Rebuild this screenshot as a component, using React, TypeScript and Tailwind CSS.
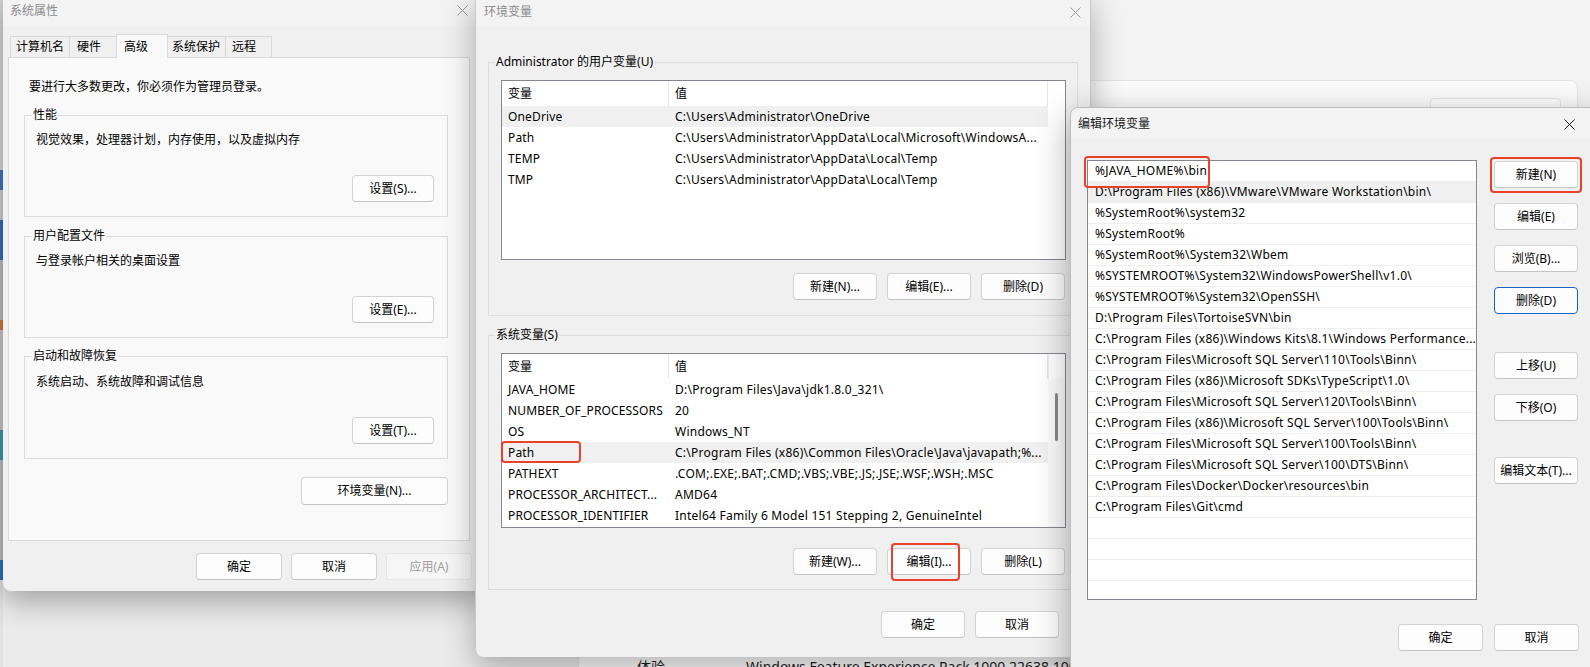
import React from "react";

const FONT = "font-['Noto_Sans','Noto_Sans_CJK_SC',sans-serif]";

function X({ color }: { color: string }) {
  return (
    <svg width="11" height="11" viewBox="0 0 11 11" fill="none">
      <path d="M0.5 0.5L10.5 10.5M10.5 0.5L0.5 10.5" stroke={color} strokeWidth="1" />
    </svg>
  );
}

type BtnProps = { children: React.ReactNode; className?: string; variant?: "normal" | "disabled" | "focus" };
function Btn({ children, className = "", variant = "normal" }: BtnProps) {
  const v =
    variant === "disabled"
      ? "border-[#e6e6e6] bg-[#f6f6f6] text-[#9d9d9d]"
      : variant === "focus"
      ? "border-[#1664c0] bg-[#fdfdfd] text-black"
      : "border-[#d3d3d3] border-b-[#c4c4c4] bg-[#fdfdfd] text-black";
  return (
    <div className={`flex shrink-0 items-center justify-center rounded-[4px] border text-[12px] leading-none ${v} ${className}`}>
      {children}
    </div>
  );
}

function Group({
  label,
  className,
  labelClass,
  children,
}: {
  label: string;
  className: string;
  labelClass: string;
  children: React.ReactNode;
}) {
  return (
    <div className={`relative flex flex-col border border-[#dcdcdc] ${className}`}>
      <span className={`absolute top-[-9px] px-[1px] leading-[16px] ${labelClass}`}>{label}</span>
      {children}
    </div>
  );
}

function RedBox({ className }: { className: string }) {
  return <div className={`pointer-events-none absolute rounded-[4px] border-2 border-[#e8412c] ${className}`} />;
}

type Row = [string, string];

function VarList({ rows, hl, scroll, className, redRow }: { rows: Row[]; hl: number; scroll?: boolean; className: string; redRow?: number }) {
  return (
    <div className={`relative flex border border-[#838790] bg-white ${className}`}>
      <div className="flex w-[546px] flex-col">
        <div className="flex h-[25px] shrink-0 items-center">
          <div className="flex h-full w-[167px] items-center border-r border-[#e5e5e5] pl-[6px]">变量</div>
          <div className="flex h-full w-[379px] items-center border-r border-[#e5e5e5] pl-[6px]">值</div>
        </div>
        {rows.map((r, i) => (
          <div key={i} className={`relative flex h-[21px] shrink-0 items-center ${i === hl ? "bg-[#f0f0f0]" : ""}`}>
            <div className="w-[167px] overflow-hidden whitespace-nowrap pl-[6px] tracking-[0.15px]">{r[0]}</div>
            <div className="w-[379px] overflow-hidden whitespace-nowrap pl-[6px] pr-[2px] tracking-[0.25px]">{r[1]}</div>
            {redRow === i && <RedBox className="left-[-1px] top-[-1px] h-[22px] w-[80px]" />}
          </div>
        ))}
      </div>
      {scroll && (
        <div className="flex flex-1 flex-col">
          <div className="h-[25px] border-l border-[#eeeeee]" />
          <div className="flex flex-1 justify-center bg-[#fbfbfb] pt-[14px]">
            <div className="h-[48px] w-[3px] rounded-full bg-[#8a8a8a]" />
          </div>
        </div>
      )}
    </div>
  );
}

const userVars: Row[] = [
  ["OneDrive", "C:\\Users\\Administrator\\OneDrive"],
  ["Path", "C:\\Users\\Administrator\\AppData\\Local\\Microsoft\\WindowsA..."],
  ["TEMP", "C:\\Users\\Administrator\\AppData\\Local\\Temp"],
  ["TMP", "C:\\Users\\Administrator\\AppData\\Local\\Temp"],
];

const sysVars: Row[] = [
  ["JAVA_HOME", "D:\\Program Files\\Java\\jdk1.8.0_321\\"],
  ["NUMBER_OF_PROCESSORS", "20"],
  ["OS", "Windows_NT"],
  ["Path", "C:\\Program Files (x86)\\Common Files\\Oracle\\Java\\javapath;%..."],
  ["PATHEXT", ".COM;.EXE;.BAT;.CMD;.VBS;.VBE;.JS;.JSE;.WSF;.WSH;.MSC"],
  ["PROCESSOR_ARCHITECT...", "AMD64"],
  ["PROCESSOR_IDENTIFIER", "Intel64 Family 6 Model 151 Stepping 2, GenuineIntel"],
];

const paths = [
  "%JAVA_HOME%\\bin",
  "D:\\Program Files (x86)\\VMware\\VMware Workstation\\bin\\",
  "%SystemRoot%\\system32",
  "%SystemRoot%",
  "%SystemRoot%\\System32\\Wbem",
  "%SYSTEMROOT%\\System32\\WindowsPowerShell\\v1.0\\",
  "%SYSTEMROOT%\\System32\\OpenSSH\\",
  "D:\\Program Files\\TortoiseSVN\\bin",
  "C:\\Program Files (x86)\\Windows Kits\\8.1\\Windows Performance...",
  "C:\\Program Files\\Microsoft SQL Server\\110\\Tools\\Binn\\",
  "C:\\Program Files (x86)\\Microsoft SDKs\\TypeScript\\1.0\\",
  "C:\\Program Files\\Microsoft SQL Server\\120\\Tools\\Binn\\",
  "C:\\Program Files (x86)\\Microsoft SQL Server\\100\\Tools\\Binn\\",
  "C:\\Program Files\\Microsoft SQL Server\\100\\Tools\\Binn\\",
  "C:\\Program Files\\Microsoft SQL Server\\100\\DTS\\Binn\\",
  "C:\\Program Files\\Docker\\Docker\\resources\\bin",
  "C:\\Program Files\\Git\\cmd",
  "",
  "",
  "",
  "",
  "",
];

function SystemProps() {
  return (
    <div className="absolute left-[3px] top-[-6px] flex h-[597px] w-[483px] flex-col rounded-b-[8px] bg-[#f0f0f0] shadow-[0_10px_30px_rgba(0,0,0,0.32)]">
      <div className="flex h-[32px] shrink-0 items-center justify-between bg-[#f3f3f3] pl-[7px] pr-[18px] pt-[1px]">
        <span className="text-[#8c8c8c]">系统属性</span>
        <X color="#9a9a9a" />
      </div>
      <div className="relative z-10 -mb-px ml-[7px] mt-[8px] flex h-[24px] items-end">
        <div className="flex h-[22px] w-[60px] items-center border border-[#d9d9d9] bg-[#f0f0f0] pl-[5px]">计算机名</div>
        <div className="-ml-px flex h-[22px] w-[48px] items-center border border-[#d9d9d9] bg-[#f0f0f0] pl-[7px]">硬件</div>
        <div className="-ml-px flex h-[24px] w-[52px] items-start border border-b-0 border-[#d9d9d9] bg-[#f9f9f9] pl-[7px] pt-[3px]">高级</div>
        <div className="-ml-px flex h-[22px] w-[59px] items-center border border-[#d9d9d9] bg-[#f0f0f0] pl-[4px]">系统保护</div>
        <div className="-ml-px flex h-[22px] w-[47px] items-center border border-[#d9d9d9] bg-[#f0f0f0] pl-[6px]">远程</div>
      </div>
      <div className="ml-[5px] flex h-[484px] w-[462px] flex-col border border-[#d9d9d9] bg-[#f9f9f9]">
        <p className="ml-[20px] mt-[21px] leading-[16px]">要进行大多数更改，你必须作为管理员登录。</p>
        <Group label="性能" className="ml-[15px] mt-[20px] h-[102px] w-[424px]" labelClass="left-[7px] bg-[#f9f9f9]">
          <p className="ml-[11px] mt-[16px] leading-[16px]">视觉效果，处理器计划，内存使用，以及虚拟内存</p>
          <Btn className="mr-[13px] mt-[27px] h-[27px] w-[82px] self-end">设置(S)...</Btn>
        </Group>
        <Group label="用户配置文件" className="ml-[15px] mt-[19px] h-[102px] w-[424px]" labelClass="left-[7px] bg-[#f9f9f9]">
          <p className="ml-[11px] mt-[16px] leading-[16px]">与登录帐户相关的桌面设置</p>
          <Btn className="mr-[13px] mt-[27px] h-[27px] w-[82px] self-end">设置(E)...</Btn>
        </Group>
        <Group label="启动和故障恢复" className="ml-[15px] mt-[18px] h-[103px] w-[424px]" labelClass="left-[7px] bg-[#f9f9f9]">
          <p className="ml-[11px] mt-[17px] leading-[16px]">系统启动、系统故障和调试信息</p>
          <Btn className="mr-[13px] mt-[27px] h-[27px] w-[82px] self-end">设置(T)...</Btn>
        </Group>
        <Btn className="mr-[21px] mt-[18px] h-[28px] w-[147px] self-end">环境变量(N)...</Btn>
      </div>
      <div className="ml-[193px] mt-[12px] flex gap-[9px]">
        <Btn className="h-[27px] w-[86px]">确定</Btn>
        <Btn className="h-[27px] w-[86px]">取消</Btn>
        <Btn className="h-[27px] w-[86px]" variant="disabled">应用(A)</Btn>
      </div>
    </div>
  );
}

function EnvVars() {
  return (
    <div className="absolute left-[475px] top-[-6px] flex h-[663px] w-[616px] flex-col rounded-b-[8px] border-x border-[#c9c9c9] bg-[#f0f0f0] shadow-[0_10px_32px_rgba(0,0,0,0.3)]">
      <div className="flex h-[33px] shrink-0 items-center justify-between bg-[#f3f3f3] pl-[8px] pr-[9px] pt-[3px]">
        <span className="text-[#8c8c8c]">环境变量</span>
        <X color="#9a9a9a" />
      </div>
      <Group label="Administrator 的用户变量(U)" className="ml-[12px] mt-[35px] h-[254px] w-[590px]" labelClass="left-[6px] bg-[#f0f0f0]">
        <VarList rows={userVars} hl={0} className="ml-[12px] mt-[17px] h-[180px] w-[565px]" />
        <div className="mr-[12px] mt-[13px] flex justify-end gap-[10px]">
          <Btn className="h-[27px] w-[84px]">新建(N)...</Btn>
          <Btn className="h-[27px] w-[84px]">编辑(E)...</Btn>
          <Btn className="h-[27px] w-[84px]">删除(D)</Btn>
        </div>
      </Group>
      <Group label="系统变量(S)" className="ml-[12px] mt-[19px] h-[255px] w-[590px]" labelClass="left-[6px] bg-[#f0f0f0]">
        <VarList rows={sysVars} hl={3} scroll redRow={3} className="ml-[12px] mt-[17px] h-[175px] w-[565px]" />
        <div className="mr-[12px] mt-[20px] flex justify-end gap-[10px]">
          <Btn className="h-[27px] w-[84px]">新建(W)...</Btn>
          <div className="relative">
            <Btn className="h-[27px] w-[84px]">编辑(I)...</Btn>
            <RedBox className="left-[4px] top-[-5px] h-[38px] w-[69px]" />
          </div>
          <Btn className="h-[27px] w-[84px]">删除(L)</Btn>
        </div>
      </Group>
      <div className="mr-[31px] mt-[21px] flex justify-end gap-[10px]">
        <Btn className="h-[27px] w-[84px]">确定</Btn>
        <Btn className="h-[27px] w-[84px]">取消</Btn>
      </div>
    </div>
  );
}

function EditEnv() {
  return (
    <div className="absolute left-[1070px] top-[107px] flex h-[575px] w-[530px] flex-col rounded-tl-[8px] border border-[#bdbdbd] bg-[#f0f0f0] shadow-[0_10px_34px_rgba(0,0,0,0.35)]">
      <div className="flex h-[30px] shrink-0 items-center justify-between rounded-tl-[8px] bg-[#f3f3f3] pl-[7px] pr-[24px] pt-[2px]">
        <span className="text-[#1a1a1a]">编辑环境变量</span>
        <X color="#1a1a1a" />
      </div>
      <div className="ml-[16px] mt-[22px] flex">
        <div className="relative h-[440px] w-[390px] border border-[#838790] bg-white">
          <div className="h-full overflow-hidden">
            {paths.map((p, i) => (
              <div
                key={i}
                className={`flex h-[21px] items-center border-b border-[#efefef] pl-[7px] tracking-[0.25px] ${i === 1 ? "bg-[#f0f0f0]" : ""}`}
              >
                <span className="overflow-hidden whitespace-nowrap pr-[2px]">{p}</span>
              </div>
            ))}
          </div>
          <RedBox className="left-[-4px] top-[-5px] h-[32px] w-[126px]" />
        </div>
        <div className="ml-[17px] flex flex-col pt-[1px]">
          <div className="relative">
            <Btn className="h-[27px] w-[84px]">新建(N)</Btn>
            <RedBox className="-left-[4px] -right-[4px] -top-[4px] -bottom-[5px]" />
          </div>
          <Btn className="mt-[15px] h-[27px] w-[84px]">编辑(E)</Btn>
          <Btn className="mt-[15px] h-[27px] w-[84px]">浏览(B)...</Btn>
          <Btn className="mt-[15px] h-[27px] w-[84px]" variant="focus">删除(D)</Btn>
          <Btn className="mt-[38px] h-[27px] w-[84px]">上移(U)</Btn>
          <Btn className="mt-[15px] h-[27px] w-[84px]">下移(O)</Btn>
          <Btn className="mt-[36px] h-[27px] w-[84px]">编辑文本(T)...</Btn>
        </div>
      </div>
      <div className="ml-[327px] mt-[24px] flex gap-[11px]">
        <Btn className="h-[27px] w-[85px]">确定</Btn>
        <Btn className="h-[27px] w-[85px]">取消</Btn>
      </div>
    </div>
  );
}

export default function App() {
  return (
    <div className={`relative h-[667px] w-[1590px] overflow-hidden bg-[#f3f3f3] text-[12px] text-black ${FONT}`}>
      <div className="absolute left-0 top-0 h-[667px] w-[578px] bg-[#ebebeb]" />
      <div className="absolute left-0 top-[0px] flex h-[667px] w-[3px] flex-col">
        <div className="h-[170px] bg-[#d6d6d6]" />
        <div className="h-[20px] bg-[#3a78c8]" />
        <div className="h-[30px] bg-[#cfcfcf]" />
        <div className="h-[40px] bg-[#2f6fbd]" />
        <div className="h-[60px] bg-[#bdbdbd]" />
        <div className="h-[10px] bg-[#d9773a]" />
        <div className="h-[100px] bg-[#c7c7c7]" />
        <div className="h-[30px] bg-[#3a9ab0]" />
        <div className="h-[100px] bg-[#bcbcbc]" />
        <div className="h-[20px] bg-[#2a6fc4]" />
        <div className="flex-1 bg-[#e3e3e3]" />
      </div>
      <div className="absolute left-[578px] top-[648px] flex h-[40px] w-[1000px] rounded-[6px] border border-[#e5e5e5] bg-[#fbfbfb] pt-[7px] text-[14px] text-[#1b1b1b]">
        <span className="ml-[58px] w-[109px]">体验</span>
        <span>Windows Feature Experience Pack 1000.22638.1000.0</span>
      </div>
      <div className="absolute left-[1080px] top-[80px] flex h-[120px] w-[498px] justify-end rounded-[8px] border border-[#e5e5e5] bg-[#fbfbfb] pr-[16px] pt-[17px]">
        <div className="flex h-[32px] w-[131px] items-start rounded-[4px] border border-[#e5e5e5] bg-[#fefefe] pl-[17px] pt-[8px]">
          <div className="h-[3px] w-[11px] rounded-[1px] bg-[#333333]" />
        </div>
      </div>

      <SystemProps />
      <EnvVars />
      <EditEnv />
    </div>
  );
}
